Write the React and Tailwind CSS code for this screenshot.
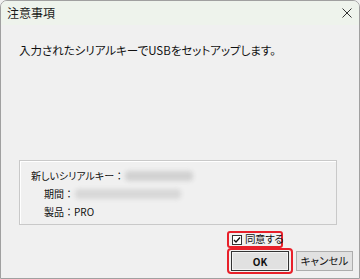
import React from "react";

export default function App() {
  const font = { fontFamily: '"Noto Sans CJK JP", "Noto Sans", sans-serif' };
  const Colon = () => <span className="[font-feature-settings:normal]">：</span>;
  return (
    <div className="w-[360px] h-[279px] bg-[#f0f0f0] overflow-hidden [font-feature-settings:'palt']" style={font}>
      <div className="w-[360px] h-[279px] flex flex-col border border-[#a0a0a0] rounded-t-[7px] overflow-hidden bg-[#f0f0f0]">
        {/* Title bar */}
        <div className="h-[24px] shrink-0 bg-[#eef3ec] flex items-center justify-between pl-[6px] pr-[7px]">
          <span className="text-[12px] leading-none text-[#1a1a1a]">注意事項</span>
          <svg width="10" height="10" viewBox="0 0 10 10">
            <path d="M0.5 0.5 L9.5 9.5 M9.5 0.5 L0.5 9.5" stroke="#333" strokeWidth="1" />
          </svg>
        </div>
        {/* Body */}
        <div className="flex-1 flex flex-col pl-[18px] pr-[6px]">
          <div className="mt-[18px] text-[11.5px] leading-[14px] text-[#111] whitespace-nowrap">
            入力されたシリアルキーでUSBをセットアップします。
          </div>
          <div className="mt-[103px] mr-[16px] h-[65px] border border-[#c9c9c9] shadow-[inset_1px_1px_0_#fff] flex flex-col pl-[11px] pt-[8px] gap-[5px] text-[10px] leading-[13px] text-[#111]">
            <div className="flex items-center">
              <span className="whitespace-nowrap">新しいシリアルキー<Colon /></span>
              <div className="ml-[1px] w-[68px] h-[10px] rounded-[4px] bg-[#d2d2d2] blur-[2px]"></div>
            </div>
            <div className="flex items-center pl-[13px]">
              <span className="whitespace-nowrap">期間<Colon /></span>
              <div className="ml-[1px] w-[106px] h-[10px] rounded-[4px] bg-[#d8d8d8] blur-[2px]"></div>
            </div>
            <div className="flex items-center pl-[13px]">
              <span className="whitespace-nowrap">製品<Colon />PRO</span>
            </div>
          </div>
          <div className="flex justify-end mt-[6px]">
            <div className="flex flex-col items-start mr-[3px]">
              <div className="h-[17px] w-[56px] border-2 border-[#e8202a] rounded-[3px] flex items-center pl-[3px] gap-[3px]">
                <div className="w-[10px] h-[10px] shrink-0 border border-[#333] bg-white flex items-center justify-center">
                  <svg width="8" height="8" viewBox="0 0 8 8">
                    <path d="M1 4 L3 6 L7 1.5" stroke="#111" strokeWidth="1.3" fill="none" />
                  </svg>
                </div>
                <span className="text-[10.5px] leading-none text-[#111] whitespace-nowrap tracking-[-0.4px]">同意する</span>
              </div>
              <div className="h-[26px] w-[66px] border-2 border-[#e8202a] rounded-[4px] flex items-center justify-center">
                <div className="w-[58px] h-[20px] border border-[#333] bg-[#e1e1e1] shadow-[inset_0_0_0_1px_#f4f4f4] flex items-center justify-center text-[10px] font-bold text-[#111]">
                  OK
                </div>
              </div>
            </div>
            <div className="self-end mb-[3px] w-[57px] h-[20px] border border-[#adadad] bg-[#e1e1e1] flex items-center justify-center text-[10.5px] text-[#111] whitespace-nowrap">
              キャンセル
            </div>
          </div>
        </div>
      </div>
    </div>
  );
}
